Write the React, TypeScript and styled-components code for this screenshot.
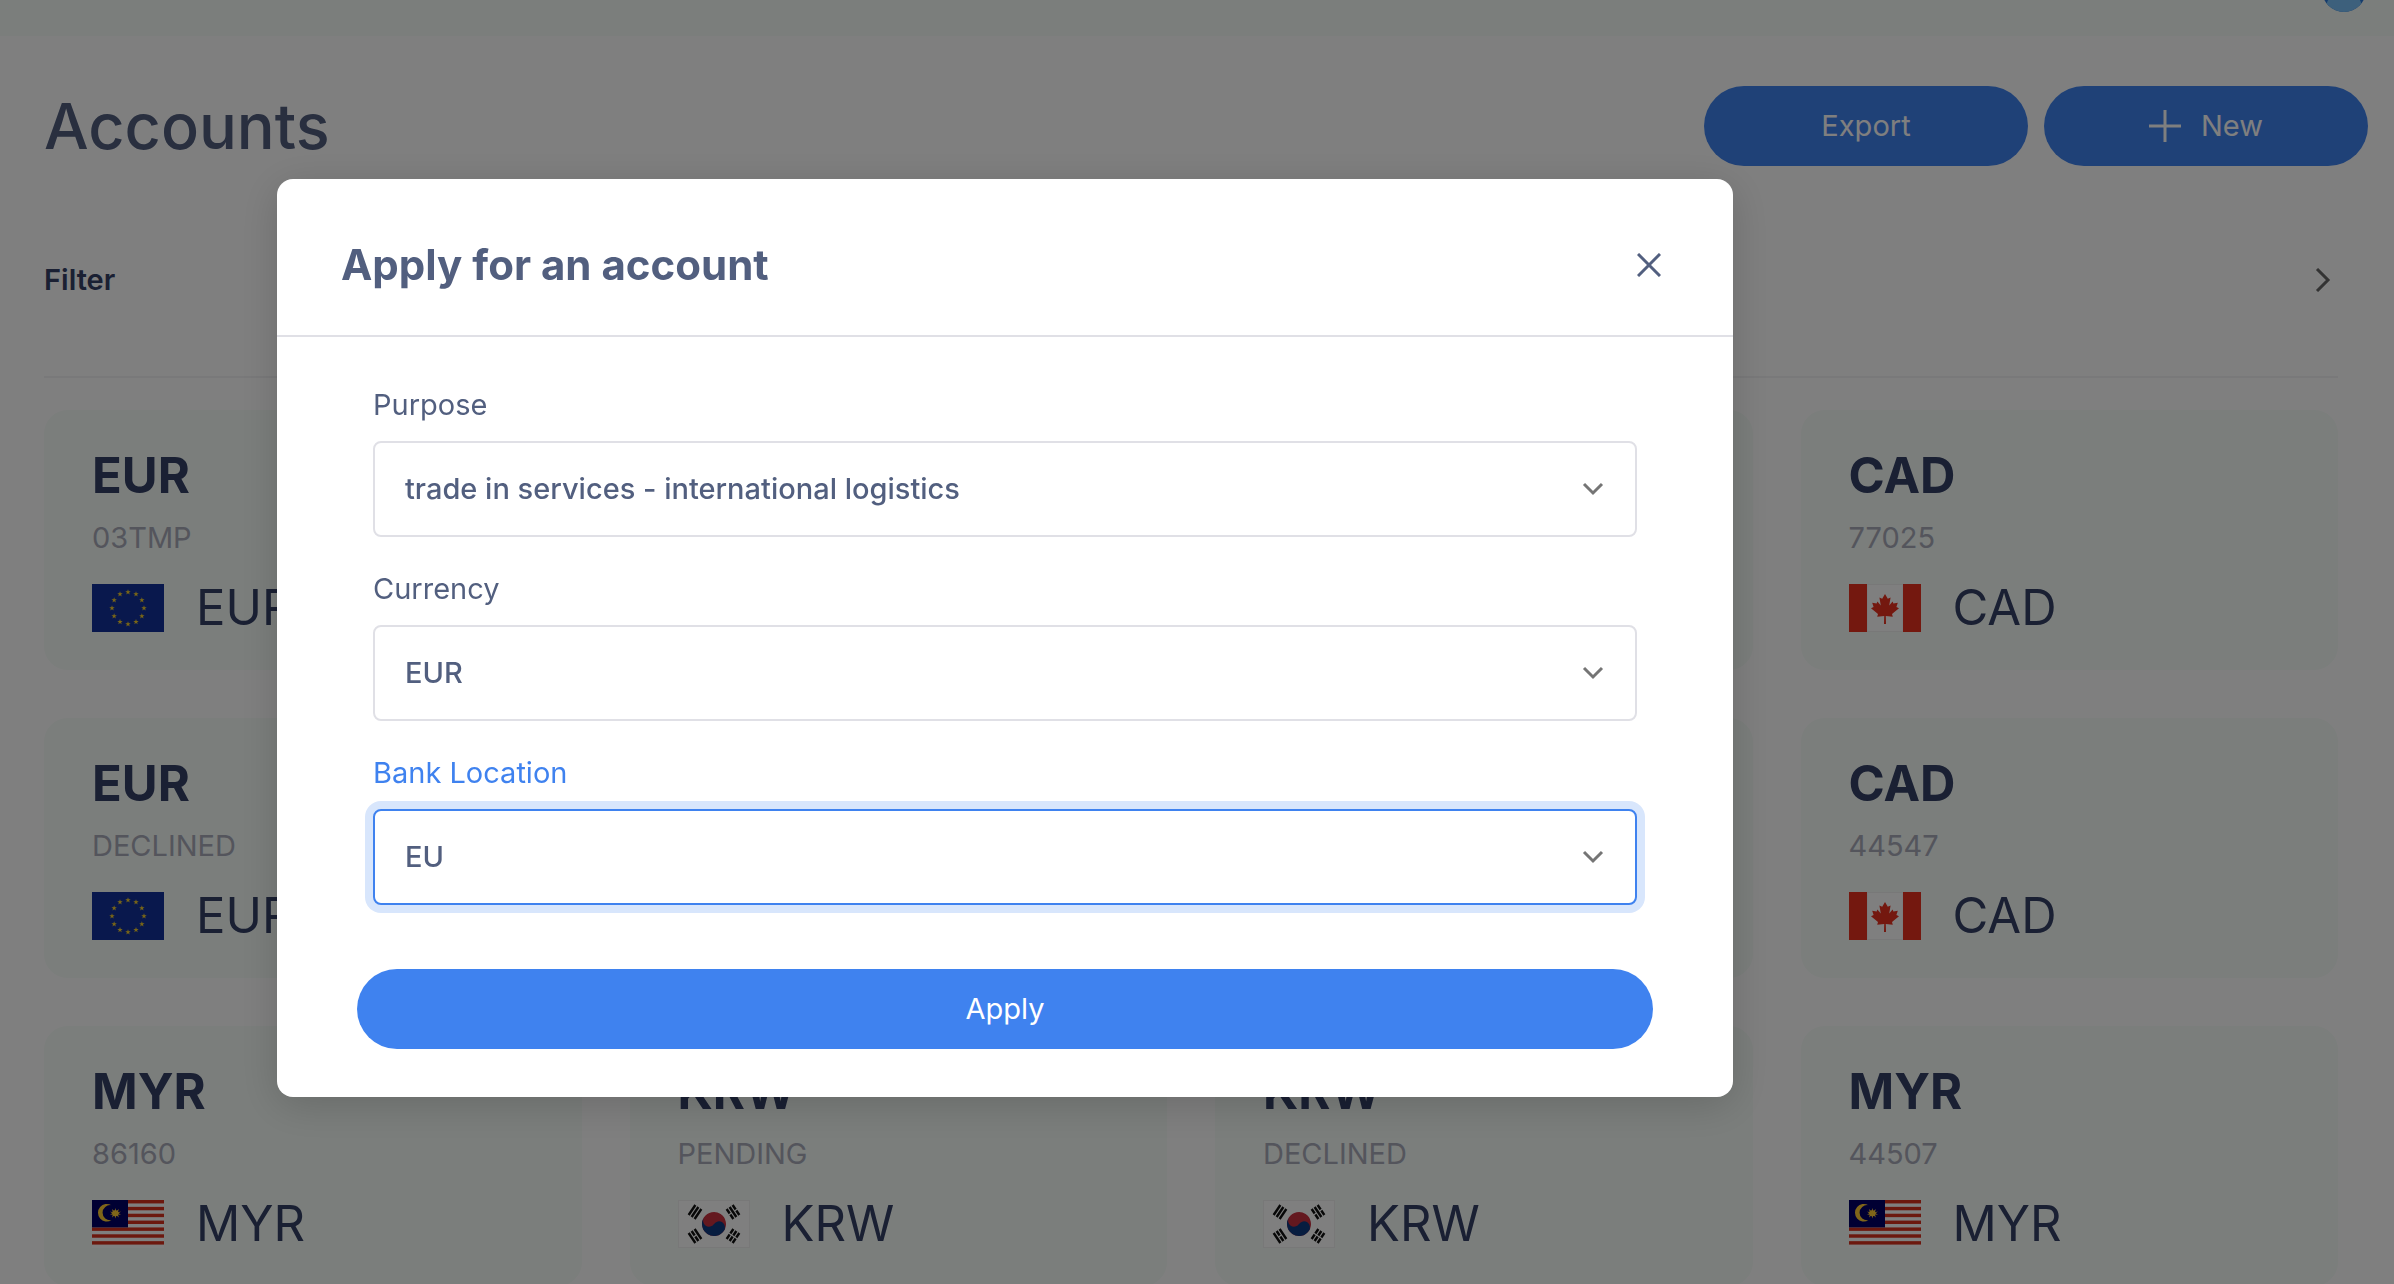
import React, { useState } from "react";
import styled, { createGlobalStyle, css } from "styled-components";

const color = {
  primary: "#3f82ef",
  heading: "#525f7f",
  ink: "#344066",
  muted: "#a8aab8",
  surface: "#f6fcf8",
  line: "#e0e0e6",
};

const GlobalStyle = createGlobalStyle`
  * { box-sizing: border-box; }
  html { height: 100%; }
  body {
    margin: 0;
    height: 100%;
    overflow: hidden;
    background: #fff;
    color: ${color.ink};
    font-family: Inter, "Open Sans", sans-serif;
    font-size: 29px;
    line-height: 40px;
  }
  h1, h2, h3, p { margin: 0; }
  button, select { font: inherit; }
`;

const TopBar = styled.header`
  display: flex;
  align-items: flex-end;
  justify-content: flex-end;
  height: 36px;
  padding: 0 28px 24px;
  background: ${color.surface};
`;

const Avatar = styled.svg`
  flex: none;
  width: 44px;
  height: 44px;
`;

const Page = styled.main`
  padding: 50px 56px 0 44px;
`;

const PageHeader = styled.div`
  display: flex;
  align-items: center;
  justify-content: space-between;
  margin-right: -30px;
`;

const PageTitle = styled.h1`
  font-size: 63px;
  line-height: 80px;
  font-weight: 500;
  color: ${color.heading};
`;

const Actions = styled.div`
  display: flex;
  gap: 16px;
`;

const Button = styled.button<{ $wide?: boolean }>`
  display: flex;
  align-items: center;
  justify-content: center;
  gap: 20px;
  width: ${(p) => (p.$wide ? "100%" : "324px")};
  height: 80px;
  border: 0;
  border-radius: 40px;
  background: ${color.primary};
  color: #fff;
  cursor: pointer;
`;

const FilterBar = styled.button`
  display: flex;
  align-items: center;
  justify-content: space-between;
  width: 100%;
  margin-bottom: 32px;
  padding: 94px 4px 76px 0;
  border: 0;
  border-bottom: 2px solid #f2f2f4;
  background: none;
  color: ${color.ink};
  font-weight: 600;
`;

const CardGrid = styled.section`
  display: grid;
  grid-template-columns: repeat(4, 1fr);
  gap: 48px;
`;

const Card = styled.article`
  padding: 36px 48px 32px;
  border-radius: 24px;
  background: ${color.surface};
`;

const CardTitle = styled.h3`
  font-size: 49px;
  line-height: 60px;
  font-weight: 700;
`;

const CardStatus = styled.p`
  margin: 12px 0 20px;
  color: ${color.muted};
`;

const CardCurrency = styled.div`
  display: flex;
  align-items: center;
  gap: 32px;
  font-size: 49px;
  line-height: 60px;
`;

const FlagSvg = styled.svg`
  flex: none;
  width: 72px;
  height: 48px;
`;

const Overlay = styled.div`
  position: fixed;
  inset: 0;
  display: flex;
  align-items: flex-start;
  justify-content: center;
  padding: 179px 384px 0 0;
  background: rgba(0, 0, 0, 0.5);
`;

const Modal = styled.div`
  width: 1456px;
  max-width: 90%;
  border-radius: 16px;
  background: #fff;
  box-shadow: 0 8px 40px rgba(0, 0, 0, 0.16);
`;

const ModalHeader = styled.div`
  display: flex;
  align-items: center;
  justify-content: space-between;
  padding: 64px 64px 48px;
  border-bottom: 2px solid ${color.line};
`;

const ModalTitle = styled.h2`
  font-size: 42px;
  line-height: 44px;
  font-weight: 700;
  color: ${color.heading};
`;

const CloseButton = styled.button`
  display: grid;
  place-items: center;
  width: 40px;
  height: 40px;
  padding: 0;
  border: 0;
  background: none;
  color: ${color.heading};
  cursor: pointer;
`;

const Form = styled.form`
  display: flex;
  flex-direction: column;
  gap: 64px;
  padding: 48px 80px;
`;

const Fields = styled.div`
  display: flex;
  flex-direction: column;
  gap: 32px;
  padding: 0 16px;
`;

const Field = styled.div`
  display: flex;
  flex-direction: column;
  gap: 16px;
`;

const Label = styled.label<{ $active?: boolean }>`
  color: ${(p) => (p.$active ? color.primary : color.heading)};
`;

const SelectBox = styled.div`
  display: grid;
  align-items: center;

  > * {
    grid-area: 1 / 1;
  }
`;

const Select = styled.select<{ $active?: boolean }>`
  appearance: none;
  width: 100%;
  height: 96px;
  padding: 0 80px 0 30px;
  border: 2px solid ${color.line};
  border-radius: 8px;
  outline: none;
  background: #fff;
  color: ${color.heading};
  font-weight: 500;
  ${(p) =>
    p.$active &&
    css`
      border-color: ${color.primary};
      box-shadow: 0 0 0 8px #d8e6fc;
    `}
`;

const Caret = styled.svg`
  justify-self: end;
  width: 24px;
  height: 16px;
  margin-right: 32px;
  pointer-events: none;
`;

const starPath = "M0 -2.8 L0.7 -0.8 L2.7 -0.8 L1.1 0.4 L1.7 2.4 L0 1.2 L-1.7 2.4 L-1.1 0.4 L-2.7 -0.8 L-0.7 -0.8 Z";

const EuFlag = () => (
  <FlagSvg viewBox="0 0 72 48" aria-hidden="true">
    <rect width="72" height="48" fill="#12319a" />
    {Array.from({ length: 12 }, (_, i) => {
      const a = (i * Math.PI) / 6;
      return (
        <path
          key={i}
          d={starPath}
          fill="#f4cc2c"
          transform={`translate(${36 + 16 * Math.sin(a)} ${24 - 16 * Math.cos(a)})`}
        />
      );
    })}
  </FlagSvg>
);

const CaFlag = () => (
  <FlagSvg viewBox="0 0 72 48" aria-hidden="true">
    <rect width="72" height="48" fill="#fff" />
    <rect x="18" y="0.5" width="36" height="47" fill="none" stroke="#f0f0f0" />
    <path d="M0 0H18V48H0ZM54 0H72V48H54Z" fill="#e8311f" />
    <path
      d="M36 10L33.2 14.8L30.4 13.4L31.8 21.4L28.4 17.4L27.6 19.6L23.2 18.8L24.6 23L22 24.2L29 30L28.2 32.8L35.2 32L35 40H37L36.8 32L43.8 32.8L43 30L50 24.2L47.4 23L48.8 18.8L44.4 19.6L43.6 17.4L40.2 21.4L41.6 13.4L38.8 14.8Z"
      fill="#e8311f"
    />
  </FlagSvg>
);

const MyFlag = () => (
  <FlagSvg viewBox="0 0 72 48" aria-hidden="true">
    <rect width="72" height="48" fill="#fff" />
    {[0, 1, 2, 3, 4, 5, 6].map((i) => (
      <rect key={i} y={i * 6.86} width="72" height="3.43" fill="#d8301c" />
    ))}
    <rect width="36" height="27.4" fill="#000066" />
    <path d="M19.4 5.2A8.8 8.8 0 1 0 19.4 20.2A7.6 7.6 0 1 1 19.4 5.2Z" fill="#fc3" />
    <path
      d="M23.4 8L24.3 11.3L26.8 9L26 12.2L29 11.6L26.6 13.2L29 14.8L26 14.4L26.8 17.4L24.3 15.2L23.4 18.4L22.5 15.2L20 17.4L20.8 14.4L18 14.8L20.2 13.2L18 11.6L20.8 12.2L20 9L22.5 11.3Z"
      fill="#fc3"
    />
    <circle cx="23.4" cy="13.2" r="3" fill="#fc3" />
  </FlagSvg>
);

const KrFlag = () => (
  <FlagSvg viewBox="0 0 72 48" aria-hidden="true">
    <rect x="0.5" y="0.5" width="71" height="47" fill="#fff" stroke="#f0f0f0" />
    <g transform="rotate(33.7 36 24)">
      <circle cx="36" cy="24" r="12" fill="#c8303f" />
      <path d="M24 24A6 6 0 0 0 36 24A6 6 0 0 1 48 24A12 12 0 0 1 24 24Z" fill="#0f3a80" />
    </g>
    {[
      { x: 17, y: 12, r: -56, d: "M-6 -3.6H6M-6 0H6M-6 3.6H6" },
      { x: 55, y: 12, r: 56, d: "M-6 -3.6H-0.6M0.6 -3.6H6M-6 0H6M-6 3.6H-0.6M0.6 3.6H6" },
      { x: 17, y: 36, r: 56, d: "M-6 -3.6H6M-6 0H-0.6M0.6 0H6M-6 3.6H6" },
      { x: 55, y: 36, r: -56, d: "M-6 -3.6H-0.6M0.6 -3.6H6M-6 0H-0.6M0.6 0H6M-6 3.6H-0.6M0.6 3.6H6" },
    ].map((t, i) => (
      <path
        key={i}
        d={t.d}
        transform={`translate(${t.x} ${t.y}) rotate(${t.r})`}
        stroke="#111"
        strokeWidth="2.4"
      />
    ))}
  </FlagSvg>
);

const flags = { EUR: EuFlag, CAD: CaFlag, MYR: MyFlag, KRW: KrFlag };
type Currency = keyof typeof flags;

const accounts: { currency: Currency; status: string }[] = [
  { currency: "EUR", status: "03TMP" },
  { currency: "EUR", status: "PENDING" },
  { currency: "CAD", status: "PENDING" },
  { currency: "CAD", status: "77025" },
  { currency: "EUR", status: "DECLINED" },
  { currency: "EUR", status: "PENDING" },
  { currency: "CAD", status: "DECLINED" },
  { currency: "CAD", status: "44547" },
  { currency: "MYR", status: "86160" },
  { currency: "KRW", status: "PENDING" },
  { currency: "KRW", status: "DECLINED" },
  { currency: "MYR", status: "44507" },
];

const AccountCard = ({ currency, status }: { currency: Currency; status: string }) => {
  const Flag = flags[currency];
  return (
    <Card>
      <CardTitle>{currency}</CardTitle>
      <CardStatus>{status}</CardStatus>
      <CardCurrency>
        <Flag />
        {currency}
      </CardCurrency>
    </Card>
  );
};

const fields = [
  {
    id: "purpose",
    label: "Purpose",
    options: ["trade in services - international logistics"],
  },
  { id: "currency", label: "Currency", options: ["EUR", "CAD", "MYR", "KRW"] },
  { id: "location", label: "Bank Location", options: ["EU"] },
];

export default function App() {
  const [active, setActive] = useState("location");

  return (
    <>
      <GlobalStyle />
      <TopBar>
        <Avatar viewBox="0 0 44 44" aria-hidden="true">
          <clipPath id="avatar-clip">
            <circle cx="22" cy="22" r="22" />
          </clipPath>
          <g clipPath="url(#avatar-clip)">
            <rect width="44" height="44" fill="#2c78d8" />
            <ellipse cx="22" cy="40" rx="18" ry="17" fill="#7ac0f8" />
          </g>
        </Avatar>
      </TopBar>
      <Page>
        <PageHeader>
          <PageTitle>Accounts</PageTitle>
          <Actions>
            <Button type="button">Export</Button>
            <Button type="button">
              <svg width="32" height="32" viewBox="0 0 32 32" stroke="currentColor" strokeWidth="3" aria-hidden="true">
                <path d="M16 0V32M0 16H32" />
              </svg>
              New
            </Button>
          </Actions>
        </PageHeader>
        <FilterBar type="button">
          Filter
          <svg width="20" height="24" viewBox="0 0 20 24" fill="none" stroke="#666" strokeWidth="3" aria-hidden="true">
            <path d="M3 1L14 12L3 23" />
          </svg>
        </FilterBar>
        <CardGrid>
          {accounts.map((account, i) => (
            <AccountCard key={i} {...account} />
          ))}
        </CardGrid>
      </Page>
      <Overlay>
        <Modal role="dialog" aria-modal="true" aria-labelledby="apply-title">
          <ModalHeader>
            <ModalTitle id="apply-title">Apply for an account</ModalTitle>
            <CloseButton type="button" aria-label="Close">
              <svg width="24" height="24" viewBox="0 0 24 24" stroke="currentColor" strokeWidth="3" aria-hidden="true">
                <path d="M1 1L23 23M23 1L1 23" />
              </svg>
            </CloseButton>
          </ModalHeader>
          <Form onSubmit={(e) => e.preventDefault()}>
            <Fields>
              {fields.map((f) => (
                <Field key={f.id}>
                  <Label htmlFor={f.id} $active={active === f.id}>
                    {f.label}
                  </Label>
                  <SelectBox>
                    <Select id={f.id} $active={active === f.id} onFocus={() => setActive(f.id)}>
                      {f.options.map((o) => (
                        <option key={o}>{o}</option>
                      ))}
                    </Select>
                    <Caret viewBox="0 0 24 16" fill="none" stroke="#757575" strokeWidth="3" aria-hidden="true">
                      <path d="M3 3L12 12L21 3" />
                    </Caret>
                  </SelectBox>
                </Field>
              ))}
            </Fields>
            <Button type="submit" $wide>
              Apply
            </Button>
          </Form>
        </Modal>
      </Overlay>
    </>
  );
}
